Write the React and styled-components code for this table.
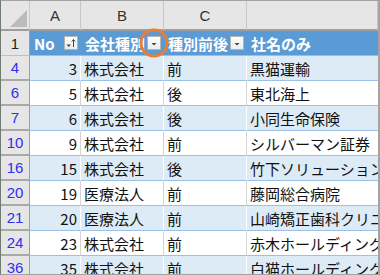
import React from 'react';
import styled, { createGlobalStyle } from "styled-components";

const GlobalStyle = createGlobalStyle`
  body {
    margin: 0;
    font-family: "Noto Sans CJK JP", "Liberation Sans", sans-serif;
  }
`

const Frame = styled.div`
  width: 380px;
  height: 275px;
  box-sizing: border-box;
  border-top: 1px solid #a3a3a3;
  border-left: 1px solid #6f7a70;
  border-right: 2px solid #a3a3a3;
  border-bottom: 1px solid #a3a3a3;
  overflow: hidden;
  background: #fff;
`
const Sheet = styled.div`
  display: grid;
  grid-template-columns: 29px 51px 83px 83px 1fr;
  grid-template-rows: 30px;
  grid-auto-rows: 25px;
`
const Corner = styled.div`
  box-sizing: border-box;
  background: #e6e6e6;
  border-right: 1px solid #c8c8c8;
  border-bottom: 2px solid #9e9e9e;
  display: flex;
  align-items: flex-end;
  justify-content: flex-end;
  padding: 0 2px 2px 0;
`
const ColHead = styled.div`
  box-sizing: border-box;
  background: #e6e6e6;
  border-right: 1px solid #c8c8c8;
  border-bottom: 2px solid #9e9e9e;
  display: flex;
  align-items: center;
  justify-content: center;
  font-family: "Liberation Sans", sans-serif;
  font-size: 15px;
  color: #333;
`
const RowHead = styled.div`
  box-sizing: border-box;
  background: #e6e6e6;
  border-right: 1px solid #9e9e9e;
  border-bottom: ${p => (p.$first ? '1px solid #c0c0c0' : '2px solid #a8a8a8')};
  display: flex;
  align-items: center;
  justify-content: center;
  font-family: "Liberation Sans", sans-serif;
  font-size: 15px;
  color: ${p => (p.$first ? '#222' : '#2f2ff0')};
`
const HeadCell = styled.div`
  box-sizing: border-box;
  background: #5b9bd5;
  border-bottom: 1px solid #a7bcd2;
  display: flex;
  align-items: center;
  min-width: 0;
  padding: 0 3px 0 4px;
  gap: 2px;
  color: #fff;
  font-weight: bold;
  font-size: 15px;
`
const HeadLabel = styled.span`
  flex: 1;
  min-width: 0;
  overflow: hidden;
  white-space: nowrap;
`
const FilterButton = styled.span`
  position: relative;
  flex: none;
  width: 14px;
  height: 14px;
  box-sizing: border-box;
  border: 1px solid #b4b4b4;
  background: linear-gradient(#ffffff, #ececec);
  display: flex;
  align-items: center;
  justify-content: center;
`
const Highlight = styled.span`
  position: absolute;
  z-index: 2;
  left: 50%;
  top: 50%;
  width: 29px;
  height: 29px;
  box-sizing: border-box;
  transform: translate(-50%, -50%);
  border: 3.5px solid #ed7d31;
  border-radius: 50%;
`
const Cell = styled.div`
  box-sizing: border-box;
  background: ${p => (p.$band ? '#ddebf7' : '#fff')};
  border-bottom: 1px solid #9bc2e6;
  border-right: ${p => (p.$last ? 'none' : p.$band ? '1px solid #ffffff' : '1px solid #d4d4d4')};
  display: flex;
  align-items: center;
  justify-content: ${p => (p.$num ? 'flex-end' : 'flex-start')};
  padding: ${p => (p.$num ? '0 3px 0 0' : '0 0 0 3px')};
  font-size: 15px;
  color: #111;
  white-space: nowrap;
  overflow: hidden;
  min-width: 0;
`

const rows = [
  { r: 4, no: 3, kind: '株式会社', when: '前', name: '黒猫運輸' },
  { r: 6, no: 5, kind: '株式会社', when: '後', name: '東北海上' },
  { r: 7, no: 6, kind: '株式会社', when: '後', name: '小同生命保険' },
  { r: 10, no: 9, kind: '株式会社', when: '前', name: 'シルバーマン証券' },
  { r: 16, no: 15, kind: '株式会社', when: '後', name: '竹下ソリューションズ' },
  { r: 20, no: 19, kind: '医療法人', when: '前', name: '藤岡総合病院' },
  { r: 21, no: 20, kind: '医療法人', when: '前', name: '山崎矯正歯科クリニック' },
  { r: 24, no: 23, kind: '株式会社', when: '前', name: '赤木ホールディングス' },
  { r: 36, no: 35, kind: '株式会社', when: '前', name: '白猫ホールディングス' },
]

function CornerMark() {
  return (
    <svg width="17" height="17" viewBox="0 0 17 17">
      <polygon points="17,0 17,17 0,17" fill="#bcbcbc" />
    </svg>
  )
}

function ArrowIcon({ sorted }) {
  if (sorted) {
    return (
      <svg width="12" height="12" viewBox="0 0 12 12">
        <polygon points="1.5,7.5 6,7.5 3.75,10" fill="#444" />
        <line x1="8.5" y1="2.5" x2="8.5" y2="10" stroke="#444" strokeWidth="1" />
        <polyline points="6.8,4.5 8.5,2.5 10.2,4.5" fill="none" stroke="#444" strokeWidth="1" />
      </svg>
    )
  }
  return (
    <svg width="12" height="12" viewBox="0 0 12 12">
      <polygon points="3.5,6 8.5,6 6,8.5" fill="#444" />
    </svg>
  )
}

function Header({ label, sorted, circled, button = true }) {
  return (
    <HeadCell>
      <HeadLabel>{label}</HeadLabel>
      {button && (
        <FilterButton>
          <ArrowIcon sorted={sorted} />
          {circled && <Highlight />}
        </FilterButton>
      )}
    </HeadCell>
  )
}

function App() {
  return (
    <>
      <GlobalStyle />
      <Frame>
        <Sheet>
          <Corner><CornerMark /></Corner>
          <ColHead>A</ColHead>
          <ColHead>B</ColHead>
          <ColHead>C</ColHead>
          <ColHead />

          <RowHead $first>1</RowHead>
          <Header label="No" sorted />
          <Header label="会社種別" circled />
          <Header label="種別前後" />
          <Header label="社名のみ" button={false} />

          {rows.map((row, i) => {
            const band = i % 2 === 0
            return (
              <React.Fragment key={row.r}>
                <RowHead>{row.r}</RowHead>
                <Cell $band={band} $num>{row.no}</Cell>
                <Cell $band={band}>{row.kind}</Cell>
                <Cell $band={band}>{row.when}</Cell>
                <Cell $band={band} $last>{row.name}</Cell>
              </React.Fragment>
            )
          })}
        </Sheet>
      </Frame>
    </>
  )
}

export default App
